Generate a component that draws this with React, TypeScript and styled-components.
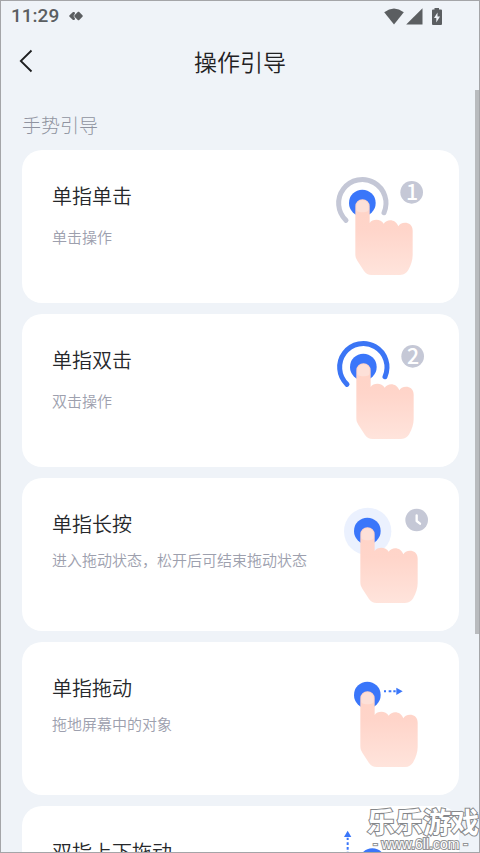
import React from "react";
import styled, { createGlobalStyle } from "styled-components";

const GlobalStyle = createGlobalStyle`
  *, *::before, *::after { box-sizing: border-box; }
  body {
    margin: 0;
    background: #eff3f8;
    font-family: "Noto Sans", "Noto Sans CJK SC", sans-serif;
  }
`;

const Screen = styled.div`
  position: relative;
  display: flex;
  flex-direction: column;
  height: 100vh;
  overflow: hidden;
  background: #eff3f8;
  border: 1px solid #a4a5a8;
`;

const StatusBar = styled.div`
  display: flex;
  align-items: center;
  justify-content: space-between;
  height: 30px;
  flex: none;
  padding: 0 36px 0 10px;
  color: #5b5e61;
`;

const StatusGroup = styled.div<{ $gap: number }>`
  display: flex;
  align-items: center;
  gap: ${(p) => p.$gap}px;
`;

const Time = styled.time`
  font: 500 19px/30px Roboto, sans-serif;
`;

const Header = styled.header`
  display: grid;
  grid-template-columns: 50px 1fr 50px;
  align-items: center;
  flex: none;
  height: 60px;
`;

const BackButton = styled.button`
  display: flex;
  align-items: center;
  height: 44px;
  padding: 0 0 0 18px;
  border: 0;
  background: none;
  color: #1d1e20;
`;

const PageTitle = styled.h1`
  margin: 0;
  font: 350 23px/32px "Noto Sans CJK SC", sans-serif;
  text-align: center;
  color: #1f2123;
`;

const Content = styled.main`
  flex: 1;
  min-height: 0;
  overflow: hidden;
  padding: 20px 20px 0 21px;
`;

const SectionTitle = styled.h2`
  margin: 0 0 11px;
  font: 300 19px/28px "Noto Sans CJK SC", sans-serif;
  color: #8f93a0;
`;

const CardList = styled.ul`
  display: flex;
  flex-direction: column;
  gap: 11px;
  margin: 0;
  padding: 0;
  list-style: none;
`;

const Card = styled.li`
  display: flex;
  justify-content: space-between;
  min-height: 153px;
  padding: 10px 9px 10px 30px;
  border-radius: 20px;
  background: #fff;
`;

const CardText = styled.div<{ $tight?: boolean }>`
  display: flex;
  flex-direction: column;
  gap: ${(p) => (p.$tight ? 10 : 15)}px;
  padding-top: 22px;
  white-space: nowrap;
`;

const CardTitle = styled.h3`
  margin: 0;
  font: 350 20px/28px "Noto Sans CJK SC", sans-serif;
  color: #26282b;
`;

const CardNote = styled.p`
  margin: 0;
  font: 350 15px/24px "Noto Sans CJK SC", sans-serif;
  color: #9da0ae;
`;

const Art = styled.svg`
  flex: none;
  width: 130px;
  height: 130px;
  margin-left: -40px;
`;

const BadgeText = styled.text`
  font: 500 64px "Noto Sans CJK SC", sans-serif;
  fill: #fff;
  text-anchor: middle;
`;

const ScrollThumb = styled.div`
  position: absolute;
  top: 89px;
  right: 0;
  width: 4px;
  height: 544px;
  background: #b9bbbe;
`;

const Watermark = styled.div`
  position: absolute;
  right: 0;
  bottom: 0;
  display: flex;
  flex-direction: column;
  align-items: center;
  color: #fff;
  paint-order: stroke fill;
  white-space: nowrap;
`;

const WatermarkName = styled.span`
  font: 700 28px/30px "Noto Sans CJK SC", sans-serif;
  -webkit-text-stroke: 2px #85878a;
`;

const WatermarkSite = styled.span`
  padding-right: 5px;
  font: 400 14px/16px "Liberation Sans", sans-serif;
  -webkit-text-stroke: 2px #919396;
`;

type Gesture = "click" | "double" | "press" | "drag" | "vertical";

interface Guide {
  kind: Gesture;
  title: string;
  note?: string;
  tight?: boolean;
}

const guides: Guide[] = [
  { kind: "click", title: "单指单击", note: "单击操作" },
  { kind: "double", title: "单指双击", note: "双击操作" },
  { kind: "press", title: "单指长按", note: "进入拖动状态，松开后可结束拖动状态", tight: true },
  { kind: "drag", title: "单指拖动", note: "拖地屏幕中的对象", tight: true },
  { kind: "vertical", title: "双指上下拖动" },
];

const handOffset: Record<Gesture, number> = {
  click: 0,
  double: 3,
  press: 15,
  drag: 15,
  vertical: 30,
};

function GestureArt({ kind }: { kind: Gesture }) {
  const skin = `skin-${kind}`;
  const ringed = kind === "click" || kind === "double";
  return (
    <Art viewBox="0 0 390 390" aria-hidden="true">
      <defs>
        <linearGradient id={skin} x1="0" y1="0" x2="0" y2="1">
          <stop offset="0" stopColor="#ffd3c6" />
          <stop offset="0.4" stopColor="#ffd5ca" />
          <stop offset="1" stopColor="#ffe4dc" />
        </linearGradient>
      </defs>
      <g transform={`translate(${handOffset[kind]} 0)`}>
        {kind === "press" && <circle cx="128" cy="130" r="71" fill="#ebf1fe" />}
        {ringed && (
          <path
            d="M78 181A71 71 0 1 1 192 158"
            fill="none"
            stroke={kind === "click" ? "#c4c7d6" : "#3b75f5"}
            strokeWidth="15"
            strokeLinecap="round"
          />
        )}
        <circle cx="127" cy={kind === "vertical" ? 137 : 129} r="40" fill="#3a76fa" />
        <path
          d="M106 139A21.500 21.500 0 0 1 149 139V189C157 176 183 176 191 191C201 175 228 177 235 199C240 184 278 181 278 212V285C278 301 272 317 266 328C261 338 253 345 240 345H155C144 345 138 341 132 333L112 302C108 296 106 291 106 283Z"
          fill={`url(#${skin})`}
        />
        <path
          d="M109 139A18.500 18.500 0 0 1 146 139V148C146 154 140 157 127 157S109 154 109 148Z"
          fill="#fde0d8"
        />
      </g>
      {kind === "click" && (
        <>
          <circle cx="275" cy="97" r="34" fill="#c5c8d6" />
          <BadgeText x="276" y="121">1</BadgeText>
        </>
      )}
      {kind === "double" && (
        <>
          <circle cx="278" cy="97" r="34" fill="#c5c8d6" />
          <BadgeText x="279" y="121">2</BadgeText>
        </>
      )}
      {kind === "press" && (
        <>
          <circle cx="290" cy="96" r="34" fill="#c5c8d6" />
          <path
            d="M290 82V99L300 107"
            fill="none"
            stroke="#fff"
            strokeWidth="7"
            strokeLinecap="round"
            strokeLinejoin="round"
          />
        </>
      )}
      {kind === "drag" && (
        <g fill="#3a76fa">
          <path d="M192 115h6v6h-6zM206 115h8v6h-8zM220 115h7v6h-7z" />
          <path d="M229 107L248 118L229 129Z" />
        </g>
      )}
      {kind === "vertical" && (
        <g fill="#3a76fa">
          <path d="M83 44L94 63H72Z" />
          <path d="M80 65h6v7h-6zM80 79h6v8h-6zM80 93h6v8h-6zM80 107h6v8h-6z" />
        </g>
      )}
    </Art>
  );
}

export default function App() {
  return (
    <>
      <GlobalStyle />
      <Screen>
        <StatusBar>
          <StatusGroup $gap={10}>
            <Time>11:29</Time>
            <svg width="14" height="10" viewBox="0 0 14 10" fill="currentColor" aria-hidden="true">
              <path d="M4 1H5.500L6 2.500L4.500 5L6 7.500L5.500 9H4L.3 5.600V4.400ZM9 .8H10L13.700 4.400V5.600L10 9.200H9L5.300 5.600V4.400Z" />
            </svg>
          </StatusGroup>
          <StatusGroup $gap={2}>
            <svg width="20" height="17" viewBox="0 0 20 17" fill="currentColor" aria-hidden="true">
              <path d="M10 16.500L.2 4.200Q10-3.200 19.800 4.200Z" />
            </svg>
            <svg width="17" height="17" viewBox="0 0 17 17" fill="currentColor" aria-hidden="true">
              <path d="M.2 16.500L16.500.2V16.500Z" />
            </svg>
            <svg width="18" height="17" viewBox="-6 0 18 17" fill="currentColor" aria-hidden="true">
              <path
                fillRule="evenodd"
                d="M3.500 0H8V1.500H10Q11 1.500 11 2.500V16Q11 17 10 17H2Q1 17 1 16V2.500Q1 1.500 2 1.500H3.500ZM6.500 4.500L3 10H5.300V14.500L9 8.500H6.500Z"
              />
            </svg>
          </StatusGroup>
        </StatusBar>
        <Header>
          <BackButton type="button" aria-label="返回">
            <svg width="14" height="24" viewBox="0 0 14 24" fill="none" stroke="currentColor" strokeWidth="1.800" aria-hidden="true">
              <path d="M12.500 1.500L1.800 12L12.500 22.500" />
            </svg>
          </BackButton>
          <PageTitle>操作引导</PageTitle>
        </Header>
        <Content>
          <SectionTitle>手势引导</SectionTitle>
          <CardList>
            {guides.map((g) => (
              <Card key={g.kind}>
                <CardText $tight={g.tight}>
                  <CardTitle>{g.title}</CardTitle>
                  {g.note && <CardNote>{g.note}</CardNote>}
                </CardText>
                <GestureArt kind={g.kind} />
              </Card>
            ))}
          </CardList>
        </Content>
        <ScrollThumb />
        <Watermark>
          <WatermarkName>乐乐游戏</WatermarkName>
          <WatermarkSite>- www.6ll.com -</WatermarkSite>
        </Watermark>
      </Screen>
    </>
  );
}
